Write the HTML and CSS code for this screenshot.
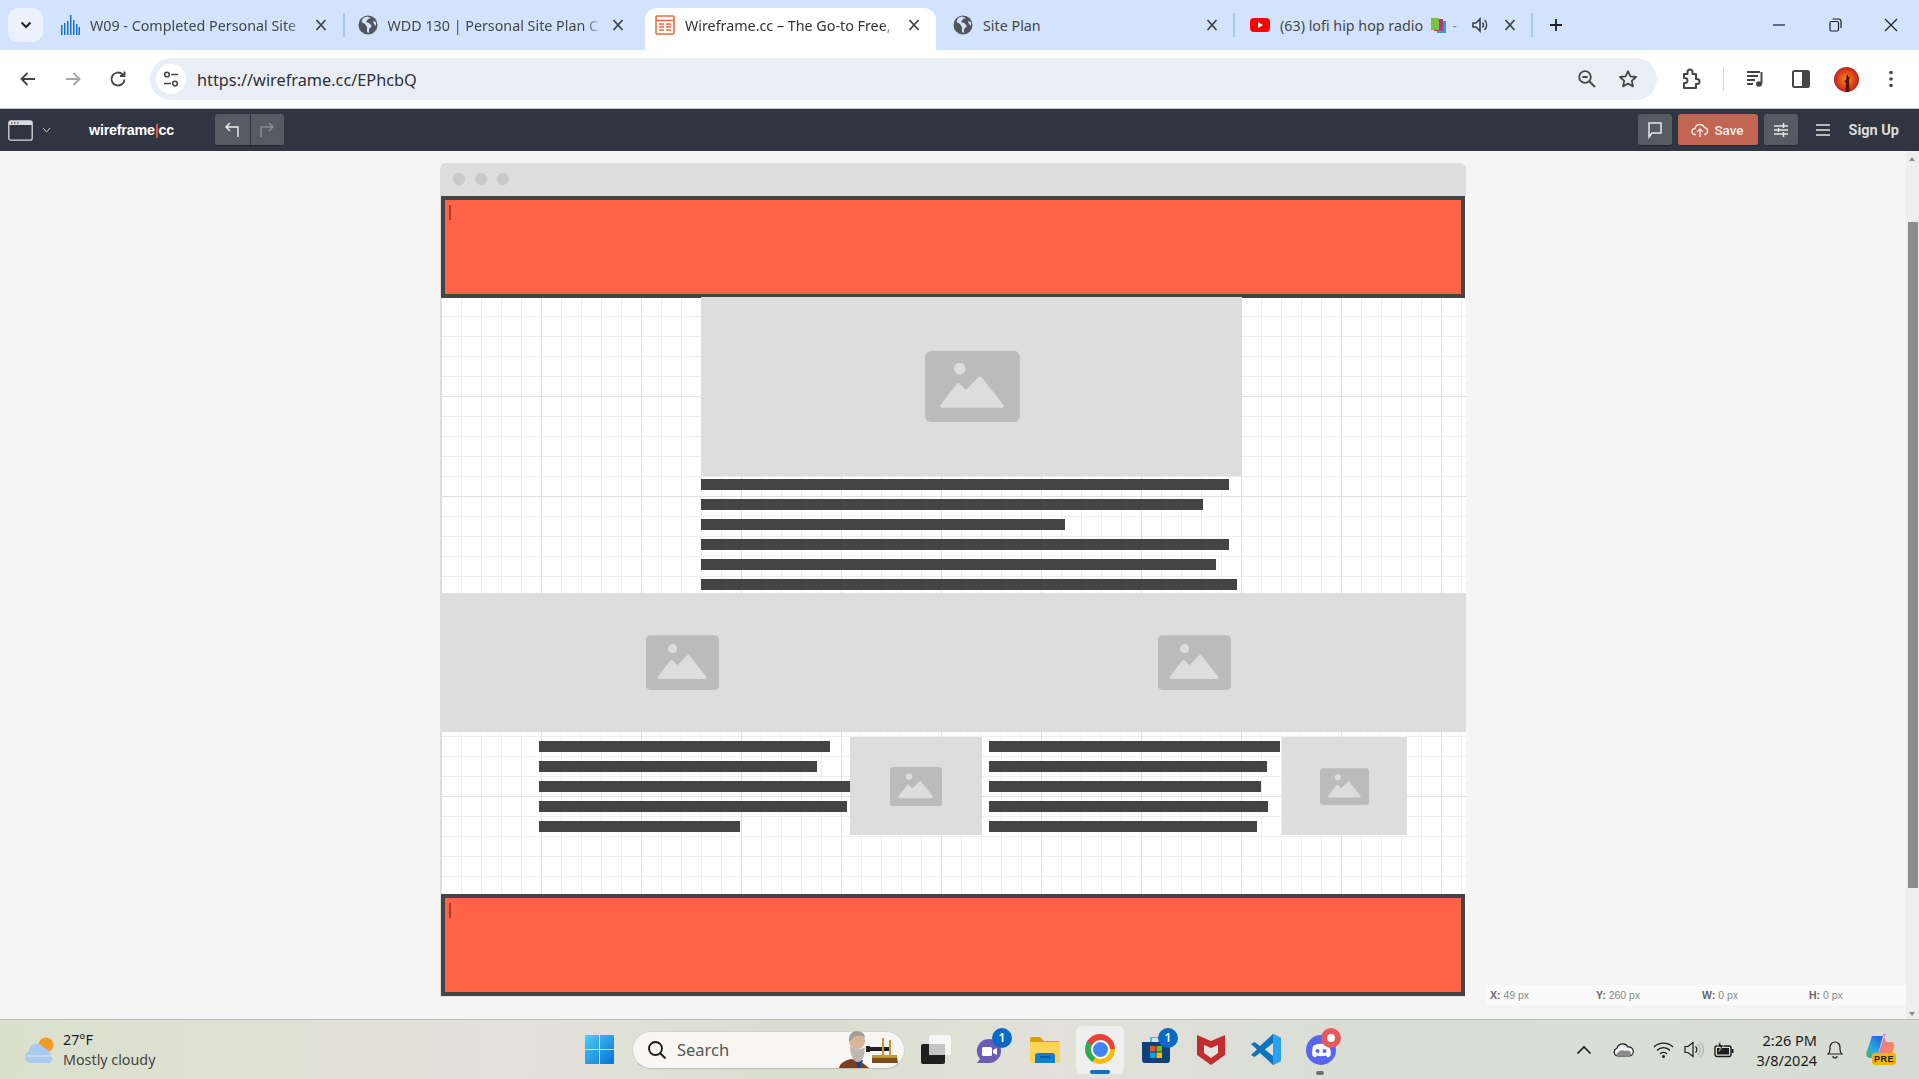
FILE: index.html
```html
<!DOCTYPE html>
<html lang="en">

<head>
    <meta charset="UTF-8">
    <meta name="viewport" content="width=device-width, initial-scale=1.0">
    <title>Wireframe.cc</title>

    <link rel="stylesheet" href="styles.css">
</head>

<body>

    <svg class="defs" width="0" height="0">
        <symbol id="picture" viewBox="0 0 100 75">
            <rect width="100" height="75" rx="6" fill="#bbbbbb"/>
            <circle cx="36.5" cy="18.5" r="6.2" fill="#dddddd"/>
            <path d="M18 58 L35 36 L43 44 L58 29 L81 58 Z" fill="#dddddd" stroke="#dddddd" stroke-width="4" stroke-linejoin="round"/>
        </symbol>
        <symbol id="globe" viewBox="0 0 20 20">
            <circle cx="10" cy="10" r="9.5" fill="#51565c"/>
            <path d="M9 1.5 L5 3 L3.5 7 L7 9 L9 12 L9 17 L11 18 L11 14 L14 11 L11 8 L8 7 L10 4 L13 3 Z M15 6 L18 7 L18 11 L16 9 Z" fill="#d3e3fd"/>
        </symbol>
        <symbol id="close" viewBox="0 0 16 16">
            <path d="M3.5 3 L12.5 13 M12.5 3 L3.5 13" stroke="#3c4043" stroke-width="1.7" fill="none"/>
        </symbol>
    </svg>

    <!-- tab strip -->
    <div class="tabstrip">
        <div class="tab-search">
            <svg width="12" height="8" viewBox="0 0 12 8"><path d="M1.5 1.5 L6 6 L10.5 1.5" stroke="#1f1f1f" stroke-width="2" fill="none"/></svg>
        </div>
        <div class="tab tab-sep">
            <svg class="favicon" viewBox="0 0 20 20">
                <path d="M1 20V10h1.5v10zM4 20V8h1.5v12zM7 20V6h1.5v14zM10 20V0h1.5v20zM13 20V5h1.5v15zM16 20V9h1.5v11zM18.500 20V12h1.500v8z" fill="#1a73c8"/>
            </svg>
            <span class="tab-title">W09 - Completed Personal Site</span>
            <svg class="tab-close"><use href="#close"/></svg>
        </div>
        <div class="tab">
            <svg class="favicon"><use href="#globe"/></svg>
            <span class="tab-title">WDD 130 | Personal Site Plan C</span>
            <svg class="tab-close"><use href="#close"/></svg>
        </div>
        <div class="tab tab-active">
            <svg class="favicon" viewBox="0 0 20 20">
                <rect x="1" y="1" width="18" height="18" rx="1" fill="#fff" stroke="#f0683f" stroke-width="1.6"/>
                <path d="M1 5.5h18M4 9h5M4 12h5M4 15h5M11 9h5M11 12h5M11 15h5" stroke="#f0683f" stroke-width="1.6"/>
            </svg>
            <span class="tab-title">Wireframe.cc – The Go-to Free,</span>
            <svg class="tab-close"><use href="#close"/></svg>
        </div>
        <div class="tab tab-sep tab-plan">
            <svg class="favicon"><use href="#globe"/></svg>
            <span class="tab-title">Site Plan</span>
            <svg class="tab-close"><use href="#close"/></svg>
        </div>
        <div class="tab tab-sep tab-radio">
            <svg class="favicon" viewBox="0 0 20 20">
                <rect y="3" width="20" height="14" rx="4" fill="#f00"/>
                <path d="M8 7 L13 10 L8 13 Z" fill="#fff"/>
            </svg>
            <span class="tab-title tab-title-short">(63) lofi hip hop radio</span>
            <svg class="books" viewBox="0 0 17 17">
                <rect x="7" y="4" width="9" height="12" fill="#1fa3e0"/>
                <rect x="4" y="2" width="9" height="12" fill="#b8367c"/>
                <rect x="1" y="1" width="8" height="12" fill="#7cc243"/>
            </svg>
            <span class="tab-dash">-</span>
            <svg class="tab-sound" viewBox="0 0 18 18">
                <path d="M2 7v4h3l4 4V3L5 7z" fill="none" stroke="#3c4043" stroke-width="1.6"/>
                <path d="M11.5 6.5a4 4 0 0 1 0 5M13.5 4a7 7 0 0 1 0 10" fill="none" stroke="#3c4043" stroke-width="1.4"/>
            </svg>
            <svg class="tab-close"><use href="#close"/></svg>
        </div>
        <svg class="tab-new" viewBox="0 0 16 16"><path d="M8 2v12M2 8h12" stroke="#1f1f1f" stroke-width="1.8"/></svg>
        <div class="win-controls">
            <svg viewBox="0 0 14 14"><path d="M1 7h12" stroke="#1f1f1f" stroke-width="1.2"/></svg>
            <svg viewBox="0 0 14 14"><rect x="2" y="3.500" width="8.500" height="9.500" rx="1.500" fill="none" stroke="#1f1f1f" stroke-width="1.2"/><path d="M4.500 1h6a2.500 2.500 0 0 1 2.500 2.500V10" fill="none" stroke="#1f1f1f" stroke-width="1.2"/></svg>
            <svg viewBox="0 0 14 14"><path d="M1 1l12 12M13 1L1 13" stroke="#1f1f1f" stroke-width="1.2"/></svg>
        </div>
    </div>

    <!-- address bar -->
    <div class="toolbar">
        <svg class="tool" viewBox="0 0 20 20"><path d="M17 10H4M9.5 4L3.5 10l6 6" fill="none" stroke="#444746" stroke-width="1.9"/></svg>
        <svg class="tool" viewBox="0 0 20 20"><path d="M3 10h13M10.5 4l6 6-6 6" fill="none" stroke="#a5a7a8" stroke-width="1.9"/></svg>
        <svg class="tool" viewBox="0 0 20 20"><path d="M16.5 10.5a6.5 6.5 0 1 1-2-5.200L16.500 7M16.500 2.500V7H12" fill="none" stroke="#444746" stroke-width="1.9"/></svg>
        <div class="omnibox">
            <div class="site-info">
                <svg width="18" height="18" viewBox="0 0 18 18">
                    <circle cx="5" cy="4.5" r="2.3" fill="none" stroke="#444746" stroke-width="1.6"/>
                    <circle cx="13" cy="13.5" r="2.3" fill="none" stroke="#444746" stroke-width="1.6"/>
                    <path d="M9 4.5h7M2 13.5h7" stroke="#444746" stroke-width="1.7"/>
                </svg>
            </div>
            <span class="url">https://wireframe.cc/EPhcbQ</span>
            <svg class="omni-icon omni-zoom" viewBox="0 0 20 20"><circle cx="8" cy="8" r="5.8" fill="none" stroke="#444746" stroke-width="1.8"/><path d="M12.5 12.5L18 18M5.3 8h5.4" stroke="#444746" stroke-width="1.8"/></svg>
            <svg class="omni-icon" viewBox="0 0 20 20"><path d="M10 2.2l2.4 5.2 5.6.6-4.2 3.800 1.200 5.600L10 14.600l-5 2.800 1.200-5.600L2 8l5.600-.6z" fill="none" stroke="#444746" stroke-width="1.8" stroke-linejoin="round"/></svg>
        </div>
        <svg class="tool-right" viewBox="0 0 22 22"><path d="M5 6h3.500V4a2.500 2.500 0 0 1 5 0v2H17v5h1a2.500 2.500 0 0 1 0 5h-1v4H5v-5h1a2.500 2.500 0 0 0 0-5H5z" fill="none" stroke="#444746" stroke-width="2" stroke-linejoin="round"/></svg>
        <div class="tool-sep"></div>
        <svg class="tool-media" viewBox="0 0 20 20"><path d="M1 3h13M1 7h11M1 11h8M1 15h6" stroke="#444746" stroke-width="1.8"/><path d="M15.500 3v11.500" stroke="#444746" stroke-width="2"/><ellipse cx="13" cy="15" rx="3" ry="2.8" fill="#444746"/></svg>
        <svg class="tool-media" viewBox="0 0 20 20"><rect x="2" y="2" width="16" height="16" rx="1.5" fill="none" stroke="#444746" stroke-width="2"/><rect x="11" y="2" width="7" height="16" fill="#444746"/></svg>
        <div class="avatar-slot">
            <div class="avatar"><svg width="25" height="25" viewBox="0 0 25 25"><path d="M13 7l1.500 3 1.500-.5-1 4 .5 11.500h-4l.5-9-2-2 2-1z" fill="#5a1410"/></svg></div>
        </div>
        <svg class="tool-media" viewBox="0 0 20 20"><circle cx="10" cy="3.5" r="1.8" fill="#444746"/><circle cx="10" cy="10" r="1.8" fill="#444746"/><circle cx="10" cy="16.5" r="1.8" fill="#444746"/></svg>
    </div>

    <!-- wireframe.cc app bar -->
    <div class="appbar">
        <svg class="page-icon" viewBox="0 0 25 21">
            <rect x="0.8" y="0.8" width="23.4" height="19.4" rx="2" fill="none" stroke="#d9d9d9" stroke-width="1.3"/>
            <path d="M1 1h23v4H1z" fill="#d9d9d9"/>
            <path d="M3 3h1.500M6 3h1.500M9 3h1.500" stroke="#2f3541" stroke-width="1.2"/>
        </svg>
        <svg class="page-chevron" viewBox="0 0 9 6"><path d="M1 1l3.500 4L8 1" fill="none" stroke="#c8c8c8" stroke-width="1"/></svg>
        <div class="logo">wireframe<span class="logo-bar">|</span>cc</div>
        <div class="undo-group">
            <div class="undo-btn">
                <svg width="16" height="18" viewBox="0 0 16 18"><path d="M14 16V6H2M6 2L2 6l4 4" fill="none" stroke="#f1f1f1" stroke-width="1.4"/></svg>
            </div>
            <div class="undo-btn">
                <svg width="16" height="18" viewBox="0 0 16 18"><path d="M2 16V6h12M10 2l4 4-4 4" fill="none" stroke="#8b8f96" stroke-width="1.4"/></svg>
            </div>
        </div>
        <div class="app-right">
            <div class="app-btn">
                <svg width="16" height="18" viewBox="0 0 16 18"><path d="M2 2h12v10H5l-3 4z" fill="none" stroke="#e8e8e8" stroke-width="1.5"/></svg>
            </div>
            <div class="app-btn save-btn">
                <svg width="18" height="18" viewBox="0 0 18 18"><path d="M5 13.500H4a3 3 0 0 1 0-6 5 5 0 0 1 9.500-1 3.600 3.600 0 0 1 .5 7h-1M9 16V8.500M6 11l3-3 3 3" fill="none" stroke="#f7e6e1" stroke-width="1.4"/></svg>
                <span>Save</span>
            </div>
            <div class="app-btn">
                <svg width="16" height="18" viewBox="0 0 16 18"><path d="M1 5h14M1 9h14M1 13h14M10.500 2v5M5.500 7v4M10.500 11v5" stroke="#e8e8e8" stroke-width="1.5"/></svg>
            </div>
            <svg class="menu-icon" width="16" height="14" viewBox="0 0 16 14"><path d="M1 2h14M1 7h14M1 12h14" stroke="#e3e3e3" stroke-width="1.5"/></svg>
            <span class="sign-up">Sign Up</span>
        </div>
    </div>

    <div class="workspace">
        <div class="wf-window">
            <div class="wf-title">
                <span class="wf-dot"></span><span class="wf-dot"></span><span class="wf-dot"></span>
            </div>
            <div class="canvas">
                <div class="item wf-banner wf-banner-top"><span class="caret"></span></div>

                <div class="item ph hero"><svg class="ph-icon-lg"><use href="#picture"/></svg></div>

                <div class="item text text-main">
                    <div class="bar w528"></div>
                    <div class="bar w502"></div>
                    <div class="bar w364"></div>
                    <div class="bar w528"></div>
                    <div class="bar w515"></div>
                    <div class="bar w536"></div>
                </div>

                <div class="item band">
                    <svg class="ph-icon-md"><use href="#picture"/></svg>
                    <svg class="ph-icon-md"><use href="#picture"/></svg>
                </div>

                <div class="item text text-left">
                    <div class="bar w291"></div>
                    <div class="bar w278"></div>
                    <div class="bar w311"></div>
                    <div class="bar w308"></div>
                    <div class="bar w201"></div>
                </div>
                <div class="item ph thumb-left"><svg class="ph-icon-sm"><use href="#picture"/></svg></div>

                <div class="item text text-right">
                    <div class="bar w291"></div>
                    <div class="bar w278"></div>
                    <div class="bar w272"></div>
                    <div class="bar w279"></div>
                    <div class="bar w268"></div>
                </div>
                <div class="item ph thumb-right"><svg class="ph-icon-xs"><use href="#picture"/></svg></div>

                <div class="item wf-banner wf-banner-bottom"><span class="caret"></span></div>
            </div>
        </div>

        <div class="coords">
            <span><b>X:</b> 49 px</span>
            <span><b>Y:</b> 260 px</span>
            <span><b>W:</b> 0 px</span>
            <span><b>H:</b> 0 px</span>
        </div>

        <div class="scrollbar">
            <div class="arrow-up"></div>
            <div class="thumb"></div>
            <div class="arrow-down"></div>
        </div>
    </div>

    <!-- windows taskbar -->
    <div class="taskbar">
        <div class="weather">
            <svg width="32" height="28" viewBox="0 0 32 28">
                <circle cx="22" cy="9" r="7.5" fill="#f59a23"/>
                <path d="M7 27a6 6 0 0 1-2-11.600A8 8 0 0 1 20 12a6.500 6.500 0 0 1 6 7 4.500 4.500 0 0 1 0 8z" fill="#a9c9f0"/>
                <path d="M2 20h28" stroke="#dbe8f8" stroke-width="1"/>
            </svg>
            <div class="weather-text">
                <div class="temp">27°F</div>
                <div class="sky">Mostly cloudy</div>
            </div>
        </div>

        <svg class="start" viewBox="0 0 29 29">
            <defs><linearGradient id="win" x1="0" y1="0" x2="1" y2="1"><stop offset="0" stop-color="#4fcbfa"/><stop offset="1" stop-color="#0572d0"/></linearGradient></defs>
            <path d="M1 0h13v14H0V1a1 1 0 0 1 1-1zM15 0h13a1 1 0 0 1 1 1v13H15zM0 15h14v14H1a1 1 0 0 1-1-1zM15 15h14v13a1 1 0 0 1-1 1H15z" fill="url(#win)"/>
        </svg>

        <div class="search">
            <svg width="20" height="20" viewBox="0 0 20 20"><circle cx="8.5" cy="8.5" r="6.5" fill="none" stroke="#1c1c1c" stroke-width="1.9"/><path d="M13 13l5.500 5.500" stroke="#1c1c1c" stroke-width="2"/></svg>
            <span class="search-label">Search</span>
            <svg class="search-art" width="60" height="38" viewBox="0 0 60 38">
                <path d="M1 38c1-6 8-8 12-9l8 1 10 8z" fill="#7a3f22"/>
                <path d="M17 30l3 8h2l3-8z" fill="#23408a"/>
                <circle cx="19" cy="11" r="8" fill="#d7b49a"/>
                <path d="M11 12c-1-8 4-11 8-11 5 0 8 3 8 7-3-3-10-3-13 1z" fill="#a4a099"/>
                <path d="M12 16c0 8 3 16 8 16s7-8 7-15c-3 3-11 3-15-1z" fill="#bdb9b2"/>
                <path d="M28 16h4v6h-4zM32 17h19v4H32z" fill="#1f1f23"/>
                <path d="M44 8h2v18h-2zM51 10h2v16h-2z" fill="#c09a3a"/>
                <path d="M34 27h25l1 6H34z" fill="#7b4a1e"/>
                <path d="M34 25h25v3H34z" fill="#c09a3a"/>
            </svg>
        </div>

        <div class="task-slot task-view">
            <svg width="30" height="29" viewBox="0 0 30 29">
                <rect x="0" y="9" width="24" height="20" rx="2" fill="#1f1f1f"/>
                <rect x="8" y="0" width="22" height="20" rx="2" fill="#f6f6f6"/>
                <rect x="8" y="9" width="16" height="11" fill="#c4c4c4"/>
            </svg>
        </div>

        <div class="task-slot">
            <svg width="30" height="30" viewBox="0 0 30 30">
                <path d="M14 4a12 12 0 1 1 0 24H2l3-4A12 12 0 0 1 14 4z" fill="#6b5bb5"/>
                <rect x="7" y="12" width="10" height="9" rx="1.5" fill="#fff"/>
                <path d="M18 15l4-2v7l-4-2z" fill="#fff"/>
            </svg>
            <span class="badge">1</span>
        </div>

        <div class="task-slot">
            <svg width="30" height="26" viewBox="0 0 30 26">
                <path d="M0 2a2 2 0 0 1 2-2h8l4 4h14a2 2 0 0 1 2 2v4H0z" fill="#d9a010"/>
                <path d="M0 5h30v19a2 2 0 0 1-2 2H2a2 2 0 0 1-2-2z" fill="#fdd455"/>
                <path d="M5 26v-7a3 3 0 0 1 3-3h14a3 3 0 0 1 3 3v7z" fill="#0f7fd0"/>
                <path d="M10 20h10" stroke="#0a4f8f" stroke-width="1.5"/>
            </svg>
        </div>

        <div class="task-slot task-active">
            <div class="chrome-logo"><div class="chrome-eye"></div></div>
            <span class="active-mark"></span>
        </div>

        <div class="task-slot">
            <svg width="30" height="26" viewBox="0 0 30 26">
                <path d="M10 5V2a2 2 0 0 1 2-2h10M20 5V2" fill="none" stroke="#38b6e8" stroke-width="2"/>
                <path d="M1 5h28v18a3 3 0 0 1-3 3H4a3 3 0 0 1-3-3z" fill="#12407a"/>
                <rect x="9" y="9" width="5.5" height="5.5" fill="#f25022"/>
                <rect x="15.5" y="9" width="5.5" height="5.5" fill="#7fba00"/>
                <rect x="9" y="15.5" width="5.5" height="5.5" fill="#00a4ef"/>
                <rect x="15.5" y="15.5" width="5.5" height="5.5" fill="#ffb900"/>
            </svg>
            <span class="badge">1</span>
        </div>

        <div class="task-slot">
            <svg width="28" height="30" viewBox="0 0 28 30">
                <path d="M0 0l14 6 14-6v20L14 30 0 20z" fill="#c01f26" opacity="0.93"/>
                <path d="M7 10l7 3 7-3v8l-7 5-7-5z" fill="#e3e5de"/>
            </svg>
        </div>

        <div class="task-slot">
            <svg width="30" height="31" viewBox="0 0 30 31">
                <path d="M22 0l8 4v23l-8 4-13-12-5.500 4L0 21l6-5.500L0 10l3.500-2L9 12z" fill="#0e75bd"/>
                <path d="M22 0l8 4v23l-8 4z" fill="#2aa2ee"/>
                <path d="M22 9v13l-8-6.500z" fill="#dfe2da"/>
            </svg>
        </div>

        <div class="task-slot">
            <svg width="30" height="30" viewBox="0 0 30 30">
                <circle cx="15" cy="15" r="15" fill="#5865f2"/>
                <path d="M7 11c5-3 11-3 16 0 2 4 2 7 1.500 10l-3 1.500-1.500-2c-3 1-6 1-9 0l-1.500 2-3-1.500C6 18 6 15 7 11z" fill="#fff"/>
                <circle cx="11.5" cy="16" r="2" fill="#5865f2"/>
                <circle cx="18.5" cy="16" r="2" fill="#5865f2"/>
            </svg>
            <span class="notify"></span>
            <span class="running-dot"></span>
        </div>

        <div class="tray">
            <svg class="tray-icon tray-caret" width="16" height="10" viewBox="0 0 16 10"><path d="M1.500 8.500L8 2l6.500 6.500" fill="none" stroke="#1c1c1c" stroke-width="1.6"/></svg>
            <svg class="tray-icon tray-cloud" width="21" height="15" viewBox="0 0 21 15">
                <path d="M5 14a4 4 0 0 1-1-7.800A6 6 0 0 1 15 5a4.500 4.500 0 0 1 1.500 9z" fill="#f2f2f0" stroke="#1c1c1c" stroke-width="1.2"/>
                <path d="M3 13c2-4 6-6 9-4 2-1 5-1 6 2 .5 2-.5 3-1.500 3H5z" fill="#8a8a8a"/>
            </svg>
            <svg class="tray-icon tray-wifi" width="21" height="17" viewBox="0 0 21 17"><path d="M1 6a13.500 13.500 0 0 1 19 0M4 9.500a9 9 0 0 1 13 0M7 13a4.500 4.500 0 0 1 7 0" fill="none" stroke="#1c1c1c" stroke-width="1.3"/><circle cx="10.5" cy="15.5" r="1.5" fill="#1c1c1c"/></svg>
            <svg class="tray-icon tray-sound" width="20" height="17" viewBox="0 0 20 17"><path d="M1 5.500v6h3l5 4V1.500l-5 4z" fill="none" stroke="#1c1c1c" stroke-width="1.2"/><path d="M11.500 5.500a4 4 0 0 1 0 6" fill="none" stroke="#1c1c1c" stroke-width="1.2"/><path d="M14 3a8 8 0 0 1 0 11M16.500 1a11 11 0 0 1 0 15" fill="none" stroke="#a8a8a8" stroke-width="1"/></svg>
            <svg class="tray-icon tray-battery" width="21" height="17" viewBox="0 0 21 17">
                <rect x="1" y="5" width="16" height="10.500" rx="2" fill="none" stroke="#1c1c1c" stroke-width="1.4"/>
                <rect x="3" y="7" width="12" height="6.500" fill="#1c1c1c"/>
                <path d="M18.500 8v4" stroke="#1c1c1c" stroke-width="2"/>
                <path d="M6 0L3.500 6h3L5 10.500l5-6.500H7z" fill="#1c1c1c" stroke="#dde0d6" stroke-width="0.6"/>
            </svg>
            <div class="clock">
                <div>2:26 PM</div>
                <div>3/8/2024</div>
            </div>
            <svg class="bell" width="16" height="19" viewBox="0 0 16 19"><path d="M1 14c1.500-1 2-2.500 2-4.500V7a5 5 0 0 1 10 0v2.500c0 2 .5 3.500 2 4.500zM6 16a2 2 0 0 0 4 0" fill="none" stroke="#1c1c1c" stroke-width="1.2"/></svg>
            <div class="copilot">
                <svg width="29" height="25" viewBox="0 0 29 25">
                    <defs>
                        <linearGradient id="cpA" x1="0" y1="1" x2="0.6" y2="0"><stop offset="0" stop-color="#3fb950"/><stop offset="0.5" stop-color="#2aa8e0"/><stop offset="1" stop-color="#1f6fe0"/></linearGradient>
                        <linearGradient id="cpB" x1="0" y1="0" x2="1" y2="1"><stop offset="0" stop-color="#e85fc0"/><stop offset="1" stop-color="#f59a3c"/></linearGradient>
                    </defs>
                    <path d="M6 2h11l-5 18c-1 3-3 4-5 4H5C1 24-1 21 1 17z" fill="url(#cpA)"/>
                    <path d="M17 0l3 8h5c3 0 4 3 3 6l-2 6c-1 3-3 4-6 4h-9l6-18c1-3 2-5 3-6z" fill="url(#cpB)"/>
                </svg>
                <span class="pre">PRE</span>
            </div>
        </div>
    </div>

</body>
</html>
```

FILE: styles.css
```css
* {
    box-sizing: border-box;
}

html, body {
    margin: 0;
    padding: 0;
    height: 100%;
    overflow: hidden;
}

body {
    display: flex;
    flex-direction: column;
    width: 1919px;
    height: 1079px;
    font-family: "Noto Sans", "Open Sans", Arial, sans-serif;
    background: #f5f5f5;
    color: #1f1f1f;
}

.defs {
    display: block;
    height: 0;
}

svg {
    flex: none;
}

/* tab strip */
.tabstrip {
    display: flex;
    align-items: flex-end;
    flex: none;
    height: 50px;
    padding-left: 8px;
    background: #d3e3fd;
}

.tab-search {
    display: flex;
    align-items: center;
    justify-content: center;
    align-self: flex-start;
    width: 35px;
    height: 34px;
    margin: 8px 5px 0 0;
    background: #ebf2fe;
    border-radius: 10px;
}

.tab {
    position: relative;
    display: flex;
    align-items: center;
    flex: none;
    width: 297.5px;
    height: 42px;
    padding: 0 17px 8px 12px;
    font-size: 14.3px;
    color: #444746;
}

.tab-sep::after {
    content: "";
    position: absolute;
    right: 1px;
    top: 5px;
    width: 2px;
    height: 24px;
    background: #a8c7fa;
}

.tab-active {
    width: 291px;
    margin-left: 2px;
    padding-left: 10px;
    padding-right: 14px;
    background: #fff;
    color: #303134;
    border-radius: 12px 12px 0 0;
}

.tab-plan {
    width: 300px;
    padding-left: 17px;
    padding-right: 16px;
}

.tab-radio {
    width: 298px;
    padding-left: 14px;
}

.favicon {
    width: 20px;
    height: 20px;
    margin-right: 10px;
}

.tab-title {
    flex: 1;
    min-width: 0;
    margin-right: 8px;
    overflow: hidden;
    white-space: nowrap;
    -webkit-mask-image: linear-gradient(to right, #000 92%, transparent 100%);
    mask-image: linear-gradient(to right, #000 92%, transparent 100%);
}

.tab-plan .tab-title,
.tab-title-short {
    -webkit-mask-image: none;
    mask-image: none;
}

.tab-title-short {
    flex: none;
    margin-right: 7px;
}

.tab-close {
    width: 16px;
    height: 16px;
}

.books {
    width: 17px;
    height: 17px;
}

.tab-dash {
    margin-left: 5px;
    color: #8a8f94;
}

.tab-sound {
    width: 18px;
    height: 18px;
    margin: 0 13px 0 14px;
}

.tab-new {
    width: 16px;
    height: 16px;
    margin: 0 0 17px 14px;
}

.win-controls {
    display: flex;
    align-self: center;
    margin-left: auto;
}

.win-controls svg {
    width: 14px;
    height: 14px;
    margin: 0 21px;
}

/* address bar */
.toolbar {
    display: flex;
    align-items: center;
    flex: none;
    height: 58px;
    padding-left: 5px;
    background: #fff;
}

.tool {
    width: 20px;
    height: 20px;
    margin: 0 12.5px;
}

.omnibox {
    display: flex;
    align-items: center;
    flex: none;
    width: 1507px;
    height: 42px;
    margin-left: 10px;
    padding: 0 19px 0 6px;
    background: #e9eef6;
    border-radius: 21px;
}

.site-info {
    display: flex;
    align-items: center;
    justify-content: center;
    width: 30px;
    height: 30px;
    margin-right: 11px;
    background: #fff;
    border-radius: 50%;
}

.url {
    margin-top: 1px;
    font-size: 16.3px;
    color: #303134;
}

.omni-icon {
    width: 20px;
    height: 20px;
}

.omni-zoom {
    margin-left: auto;
    margin-right: 21px;
}

.tool-right {
    width: 22px;
    height: 22px;
    margin: 0 11.5px 0 22px;
}

.tool-sep {
    width: 1px;
    height: 24px;
    margin: 0 10px;
    background: #c7d7ee;
}

.tool-media {
    width: 20px;
    height: 20px;
    margin: 0 12.5px;
}

.avatar-slot {
    display: flex;
    justify-content: center;
    flex: none;
    width: 45px;
}

.avatar {
    display: flex;
    align-items: center;
    justify-content: center;
    width: 25px;
    height: 25px;
    overflow: hidden;
    border-radius: 50%;
    background: radial-gradient(circle at 50% 50%, #f4941f 0, #d8341c 55%, #5f100c 100%);
}

/* app bar */
.appbar {
    display: flex;
    align-items: center;
    flex: none;
    height: 43px;
    padding-left: 8px;
    border-top: 1px solid #c6c8cc;
    background: #2f3541;
}

.page-icon {
    width: 25px;
    height: 21px;
}

.page-chevron {
    width: 9px;
    height: 6px;
    margin-left: 9px;
}

.logo {
    width: 126px;
    margin-left: 38px;
    font-family: "Liberation Sans", Arial, sans-serif;
    font-size: 14.3px;
    font-weight: 700;
    letter-spacing: -0.2px;
    color: #fff;
}

.logo-bar {
    color: #e2574c;
}

.undo-group {
    display: flex;
    height: 32px;
    border-radius: 3px;
    overflow: hidden;
    border-bottom: 1px solid #22262e;
}

.undo-btn {
    display: flex;
    align-items: center;
    justify-content: center;
    width: 34.5px;
    background: #555a63;
}

.undo-btn + .undo-btn {
    border-left: 1px solid #2f3541;
}

.app-right {
    display: flex;
    align-items: center;
    margin-left: auto;
    padding-right: 20px;
}

.app-btn {
    display: flex;
    align-items: center;
    justify-content: center;
    width: 34px;
    height: 32px;
    margin-right: 6px;
    background: #555a63;
    border-radius: 3px;
    border-bottom: 1px solid #22262e;
}

.save-btn {
    gap: 5px;
    width: 80px;
    background: #c26552;
    font-family: Roboto, Arial, sans-serif;
    font-size: 13.5px;
    font-weight: 500;
    color: #fbeee9;
}

.menu-icon {
    margin: 0 18px 0 11px;
}

.sign-up {
    font-family: Roboto, Arial, sans-serif;
    font-size: 14.5px;
    font-weight: 700;
    color: #dcdcdc;
}

/* editor area */
.workspace {
    position: relative;
    display: flex;
    flex: 1;
    min-height: 0;
    padding: 12px 0 0 440px;
    background: #f5f5f5;
}

.wf-window {
    flex: none;
    width: 1026px;
    height: 834px;
}

.wf-title {
    display: flex;
    align-items: center;
    gap: 10px;
    height: 33px;
    padding: 0 0 2px 13px;
    background: #dddddd;
    border-radius: 6px 6px 0 0;
}

.wf-dot {
    width: 12px;
    height: 12px;
    background: #c9c9c9;
    border-radius: 50%;
}

.canvas {
    position: relative;
    height: 801px;
    margin-left: 1px;
    box-shadow: -1px 0 0 #dddddd;
    background-color: #fff;
    background-image:
        linear-gradient(to right, #e0e0e0 1px, transparent 1px),
        linear-gradient(to bottom, #e0e0e0 1px, transparent 1px),
        linear-gradient(to right, #eeeeee 1px, transparent 1px),
        linear-gradient(to bottom, #eeeeee 1px, transparent 1px);
    background-size: 100px 100px, 100px 100px, 20px 20px, 20px 20px;
}

/* items sit on the free canvas, at their drawn coordinates */
.item {
    position: absolute;
}

.wf-banner {
    left: 0;
    width: 1024px;
    height: 102px;
    padding: 5px 0 0 4px;
    background: #ff6347;
    border: 4px solid #444444;
}

.wf-banner-top {
    top: 0;
}

.wf-banner-bottom {
    top: 698px;
}

.caret {
    display: block;
    width: 2px;
    height: 15px;
    background: #a63d26;
}

.ph {
    display: flex;
    align-items: center;
    justify-content: center;
    background: #dddddd;
}

.hero {
    left: 260px;
    top: 101px;
    width: 541px;
    height: 179px;
}

.ph-icon-lg {
    width: 95px;
    height: 71px;
    margin-left: 2px;
}

.ph-icon-md {
    width: 73px;
    height: 55px;
}

.ph-icon-sm {
    width: 52px;
    height: 39px;
}

.ph-icon-xs {
    width: 49px;
    height: 37px;
}

.text {
    display: flex;
    flex-direction: column;
    gap: 9px;
}

.text-main {
    left: 260px;
    top: 283px;
}

.text-left {
    left: 98px;
    top: 545px;
}

.text-right {
    left: 548px;
    top: 545px;
}

.bar {
    height: 11px;
    background: #444444;
}

.w201 { width: 201px; }
.w268 { width: 268px; }
.w272 { width: 272px; }
.w278 { width: 278px; }
.w279 { width: 279px; }
.w291 { width: 291px; }
.w308 { width: 308px; }
.w311 { width: 311px; }
.w364 { width: 364px; }
.w502 { width: 502px; }
.w515 { width: 515px; }
.w528 { width: 528px; }
.w536 { width: 536px; }

.band {
    display: flex;
    align-items: center;
    gap: 439px;
    left: -1px;
    top: 397px;
    width: 1026px;
    height: 139px;
    padding-left: 206px;
    background: #dddddd;
}

.thumb-left {
    left: 409px;
    top: 541px;
    width: 132px;
    height: 98px;
}

.thumb-right {
    left: 841px;
    top: 541px;
    width: 125px;
    height: 98px;
}

.coords {
    position: absolute;
    left: 1486px;
    top: 834px;
    display: grid;
    grid-template-columns: 106px 106px 107px 1fr;
    align-items: center;
    width: 424px;
    height: 20px;
    padding-left: 4px;
    background: #fafafa;
    font-family: "Liberation Sans", Arial, sans-serif;
    font-size: 10.5px;
    color: #8a8a8a;
}

.coords b {
    color: #666;
}

.scrollbar {
    position: absolute;
    right: 0;
    top: 0;
    bottom: 0;
    width: 13px;
    background: #eeeeee;
}

.arrow-up {
    position: absolute;
    left: 3px;
    top: 6px;
    border: 3.5px solid transparent;
    border-top: 0;
    border-bottom: 4px solid #8c8c8c;
}

.arrow-down {
    position: absolute;
    left: 3px;
    bottom: 3px;
    border: 3.5px solid transparent;
    border-bottom: 0;
    border-top: 4px solid #8c8c8c;
}

.thumb {
    position: absolute;
    left: 2px;
    top: 71px;
    width: 10px;
    height: 666px;
    background: #8c8c8c;
}

/* taskbar */
.taskbar {
    display: flex;
    align-items: center;
    flex: none;
    height: 60px;
    border-top: 1px solid #b9bab4;
    background: linear-gradient(to right, #dbe0cd 0, #dfe0d4 14%, #e3e1db 27%, #d9decf 42%, #e2e1da 55%, #d9ded5 70%, #dadfd5 85%, #d8dcd4 100%);
}

.weather {
    display: flex;
    align-items: center;
    flex: none;
    gap: 7px;
    width: 585px;
    padding-left: 24px;
    font-size: 14.3px;
}

.weather-text {
    line-height: 20px;
}

.sky {
    color: #444;
}

.start {
    width: 29px;
    height: 29px;
}

.search {
    display: flex;
    align-items: center;
    flex: none;
    position: relative;
    width: 273px;
    height: 38px;
    margin-left: 18px;
    padding-left: 14px;
    background: #f7f6f3;
    border: 1px solid #d4d4cc;
    border-bottom-color: #bdbdb6;
    border-radius: 19px;
}

.search-label {
    margin-left: 10px;
    font-size: 16.5px;
    color: #555;
}

.search-art {
    position: absolute;
    right: 6px;
    bottom: 0;
}

.task-slot {
    position: relative;
    display: flex;
    align-items: center;
    justify-content: center;
    flex: none;
    width: 55px;
    height: 48px;
}

.task-view {
    justify-content: flex-start;
    width: 57px;
    padding-left: 16px;
}

.task-active {
    width: 48px;
    margin: 0 4px;
    background: #eff0ee;
    border-radius: 6px;
}

.chrome-logo {
    display: flex;
    align-items: center;
    justify-content: center;
    width: 30px;
    height: 30px;
    margin-bottom: 1px;
    border-radius: 50%;
    background: conic-gradient(from 300deg, #ea4335 0 150deg, #fbbc04 150deg 270deg, #34a853 270deg 360deg);
}

.chrome-eye {
    width: 15px;
    height: 15px;
    background: #4285f4;
    border: 2.5px solid #fff;
    border-radius: 50%;
    box-sizing: content-box;
}

.active-mark {
    position: absolute;
    left: 14px;
    bottom: 0;
    width: 20px;
    height: 4px;
    background: #0a72cc;
    border-radius: 2px;
}

.badge {
    position: absolute;
    left: 30px;
    top: 2px;
    width: 20px;
    height: 20px;
    background: #0a69c4;
    border-radius: 50%;
    font-size: 12px;
    font-weight: 600;
    line-height: 20px;
    text-align: center;
    color: #fff;
}

.notify {
    position: absolute;
    left: 28px;
    top: 2px;
    width: 20px;
    height: 20px;
    background: #fff;
    border: 6px solid #e8595e;
    border-radius: 50%;
}

.running-dot {
    position: absolute;
    left: 23px;
    bottom: -1px;
    width: 8px;
    height: 4px;
    background: #707070;
    border-radius: 2px;
}

.tray {
    display: flex;
    align-items: center;
    flex: none;
    margin-left: 228px;
}

.tray-icon {
    margin-right: 14px;
}

.tray-caret {
    margin-right: 21px;
}

.tray-cloud {
    margin-right: 19px;
}

.tray-wifi {
    margin-right: 10px;
}

.tray-sound {
    margin-right: 10px;
}

.tray-battery {
    margin-right: 0;
}

.clock {
    width: 82px;
    font-size: 14.5px;
    line-height: 20px;
    text-align: right;
    color: #1c1c1c;
}

.bell {
    margin-left: 10px;
}

.copilot {
    position: relative;
    width: 30px;
    height: 31px;
    margin-left: 23px;
}

.pre {
    position: absolute;
    left: 6px;
    top: 19px;
    width: 24px;
    height: 12px;
    background: #f4b400;
    border-radius: 3px;
    font-family: "Liberation Sans", Arial, sans-serif;
    font-size: 9px;
    font-weight: 700;
    line-height: 12px;
    letter-spacing: 0.5px;
    text-align: center;
    color: #1c1c1c;
}
```
